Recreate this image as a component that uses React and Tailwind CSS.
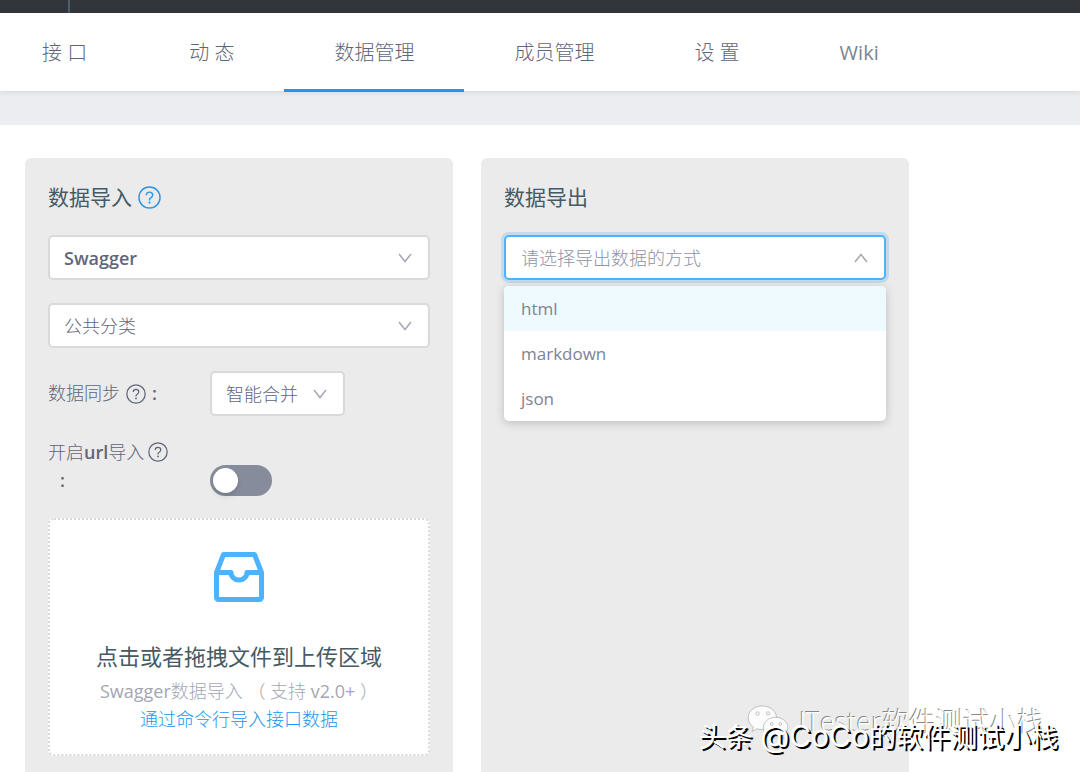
import React, { useState } from 'react';

const tabs = [
  { label: '接 口', href: '#api' },
  { label: '动 态', href: '#activity' },
  { label: '数据管理', href: '#data' },
  { label: '成员管理', href: '#members' },
  { label: '设 置', href: '#settings' },
  { label: 'Wiki', href: '#wiki' },
];

const exportTypes = ['html', 'markdown', 'json'];

const HelpIcon = ({ className = 'h-5 w-5' }) => (
  <svg viewBox="0 0 24 24" className={`shrink-0 ${className}`} fill="none" stroke="currentColor" strokeWidth="1.5">
    <circle cx="12" cy="12" r="11" />
    <path d="M8.700 9.600c0-1.900 1.500-3.200 3.300-3.200s3.300 1.300 3.300 3.100c0 1.500-.9 2.200-1.900 2.800-.9.500-1.400 1-1.400 2v.7" />
    <circle cx="12" cy="17.300" r="1.100" fill="currentColor" stroke="none" />
  </svg>
);

const Chevron = ({ up }) => (
  <svg
    viewBox="0 0 14 10"
    className={`pointer-events-none absolute right-[18px] top-[18px] h-[10px] w-[14px] ${up ? 'rotate-180' : ''}`}
    fill="none"
    stroke="#a3a7b3"
    strokeWidth="1.5"
  >
    <path d="M1 1l6 7.500L13 1" />
  </svg>
);

const Select = ({ id, label, className = '', children }) => (
  <div className={`relative ${className}`}>
    <select
      id={id}
      aria-label={label}
      className="block h-[45px] w-full appearance-none rounded-[5px] border-2 border-[#d9d9d9] bg-white px-[14px] pt-px outline-none"
    >
      {children}
    </select>
    <Chevron />
  </div>
);

const InboxIcon = () => (
  <svg viewBox="0 0 52 52" className="h-[52px] w-[52px]" fill="none" stroke="#4eb3ff" strokeWidth="5" strokeLinejoin="round">
    <path d="M3.500 21.500L10.500 3.500h31l7 18v25a2 2 0 0 1-2 2h-41a2 2 0 0 1-2-2z" />
    <path d="M3.500 21.500h14.500a8 7.500 0 0 0 16 0h14.500" />
  </svg>
);

const ImportPanel = () => {
  const [urlImport, setUrlImport] = useState(false);

  return (
    <section className="flex-1 rounded-t-md bg-[#ebebeb] px-[23px] pt-[22px]">
      <h2 className="flex items-center gap-[6px] text-[21px] font-normal leading-[34px] text-[#455a64]">
        数据导入
        <a href="#help" aria-label="帮助" className="text-[#2395f1]">
          <HelpIcon className="h-[23px] w-[23px]" />
        </a>
      </h2>

      <div className="mt-[21px] flex flex-col gap-[23px]">
        <Select id="import-type" label="导入方式" className="font-semibold">
          <option>Swagger</option>
        </Select>
        <Select id="category" label="分类">
          <option>公共分类</option>
        </Select>

        <div className="flex items-center">
          <label htmlFor="merge" className="flex w-[162px] items-center gap-[6px]">
            数据同步 <HelpIcon /> <b className="font-semibold">:</b>
          </label>
          <Select id="merge" className="w-[135px]">
            <option>智能合并</option>
          </Select>
        </div>
      </div>

      <div className="mt-[22px] flex items-end">
        <label htmlFor="url-import" className="w-[162px] pb-[2px] leading-7">
          <span className="flex items-center gap-1">
            <span>开启<b className="font-semibold">url</b>导入</span>
            <HelpIcon />
          </span>
          <b className="ml-3 font-semibold">:</b>
        </label>
        <input
          id="url-import"
          type="checkbox"
          role="switch"
          checked={urlImport}
          onChange={(e) => setUrlImport(e.target.checked)}
          className="h-[31px] w-[62px] appearance-none rounded-full bg-[#868c9c] p-[3px] before:block before:h-[25px] before:w-[25px] before:rounded-full before:bg-white before:shadow-md checked:bg-[#2395f1] checked:before:ml-[31px]"
        />
      </div>

      <div className="mb-4 mt-[22px] flex h-[238px] flex-col items-center rounded-md border-2 border-dotted border-[#d9d9d9] bg-white pt-[31px] text-center">
        <InboxIcon />
        <p className="mt-[35px] text-[22px] font-normal leading-9 text-[#455a64]">点击或者拖拽文件到上传区域</p>
        <p className="mt-[3px] leading-7 text-[#a3a7b3]">
          <span className="font-normal">Swagger</span>数据导入 （ 支持 <span className="font-normal">v2.0+</span> ）
        </p>
        <a href="#cli" className="leading-7 text-[#2395f1]">通过命令行导入接口数据</a>
      </div>
    </section>
  );
};

const ExportPanel = () => {
  const [open, setOpen] = useState(true);
  const [value, setValue] = useState('');

  return (
    <section className="flex-1 rounded-t-md bg-[#ebebeb] px-[23px] pt-[22px]">
      <h2 className="text-[21px] font-normal leading-[34px] text-[#455a64]">数据导出</h2>
      <div className="relative mt-[21px]">
        <button
          type="button"
          aria-haspopup="listbox"
          aria-expanded={open}
          onClick={() => setOpen(!open)}
          className="block h-[45px] w-full rounded-[5px] border-2 border-[#4eb3ff] bg-white px-[15px] pt-px text-left text-[#8f94a3] ring-3 ring-[#2395f1]/20"
        >
          {value || '请选择导出数据的方式'}
        </button>
        <Chevron up={open} />
        {open && (
          <ul role="listbox" className="absolute left-0 right-0 top-[51px] overflow-hidden rounded-[5px] bg-white text-[17px] font-normal text-[#7b8496] shadow-[0_2px_10px_rgba(0,0,0,0.2)]">
            {exportTypes.map((type) => (
              <li
                key={type}
                role="option"
                aria-selected={value === type}
                onClick={() => { setValue(type); setOpen(false); }}
                className="cursor-pointer px-[17px] leading-[45px] first:bg-[#eefaff]"
              >
                {type}
              </li>
            ))}
          </ul>
        )}
      </div>
    </section>
  );
};

const Watermark = () => (
  <div className="pointer-events-none absolute bottom-0 right-[22px] h-[72px] w-[360px] text-white">
    <div className="absolute right-[14px] top-[2px] flex items-center gap-[10px]">
      <svg viewBox="0 0 44 36" className="h-[34px] w-[42px]" fill="#fcfcfc" stroke="#999" strokeWidth="0.6">
        <path d="M16 1C7.500 1 1 6.500 1 13.500c0 4 2 7.500 5.500 10L5 28l5.500-2.800c2 .6 3.700.8 5.500.8 8.500 0 15-5.500 15-12.500S24.500 1 16 1z" />
        <path d="M30 13c-7.500 0-13 5-13 11s5.500 11 13 11c1.500 0 3-.2 4.500-.7L39 36.500l-1.200-4C41 30.500 43 27.500 43 24c0-6-5.500-11-13-11z" />
        <circle cx="11" cy="9" r="1.800" />
        <circle cx="22" cy="9" r="1.800" />
        <circle cx="26" cy="20" r="1.500" />
        <circle cx="35" cy="20" r="1.500" />
      </svg>
      <span className="whitespace-nowrap text-[27px] leading-10 [text-shadow:-1px_-1px_0_#888]">ITester软件测试小栈</span>
    </div>
    <p className="absolute right-0 top-4 whitespace-nowrap font-['Inter','Noto_Sans_CJK_SC',sans-serif] text-[27px] font-normal leading-10 [text-shadow:2px_2px_0_#000]">
      头条 <span className="text-[30px]">@CoCo</span>的软件测试小栈
    </p>
  </div>
);

export default function App() {
  return (
    <div className="relative flex h-screen flex-col overflow-hidden bg-white font-['Open_Sans','Noto_Sans_CJK_SC',sans-serif] text-[18px] font-light text-[#5f667a]">
      <div className="h-[13px] shrink-0 bg-[#32363a] pl-[68px]">
        <div className="h-full w-[2px] bg-[#505d6b]" />
      </div>
      <nav className="z-10 flex h-[78px] shrink-0 bg-white text-[20px] shadow-[0_1px_6px_rgba(0,0,0,0.1)]">
        {tabs.map((tab) => (
          <a
            key={tab.label}
            href={tab.href}
            className={`-mb-px border-b-3 px-[50px] leading-[80px] first:pl-[42px] first:pr-[52px] last:font-normal last:text-[#7b8496] ${tab.href === '#data' ? 'border-[#2395f1]' : 'border-transparent'}`}
          >
            {tab.label}
          </a>
        ))}
      </nav>
      <div className="h-[34px] shrink-0 bg-[#ecedf1]" />
      <main className="flex flex-1 gap-7 pl-[25px] pr-[171px] pt-[33px]">
        <ImportPanel />
        <ExportPanel />
      </main>
      <Watermark />
    </div>
  );
}
